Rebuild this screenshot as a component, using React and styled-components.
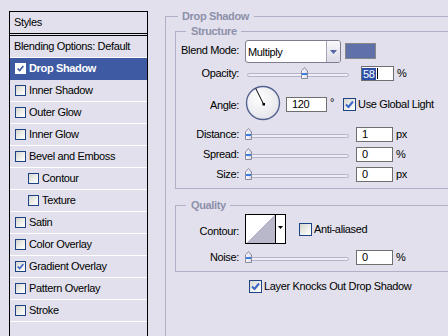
import React from 'react';
import styled, { createGlobalStyle } from 'styled-components';

const Global = createGlobalStyle`
  html, body { margin: 0; padding: 0; background: #e2e0ec; overflow: hidden; }
  body {
    font-family: "Liberation Sans", Arial, sans-serif;
    font-size: 11px;
    letter-spacing: -0.35px;
    color: #000;
  }
  * { box-sizing: border-box; }
`;

const Page = styled.div`
  display: flex;
  align-items: flex-start;
  width: 448px;
  height: 336px;
  overflow: hidden;
`;

/* ---------- left styles list ---------- */
const StylesPanel = styled.div`
  flex: none;
  width: 139px;
  height: 330px;
  margin: 11px 0 0 9px;
  border: 1px solid #000;
  border-bottom: none;
`;

const PanelHeader = styled.div`
  height: 24px;
  padding-left: 4px;
  line-height: 20px;
  border-bottom: 3px double #000;
`;

const StyleRow = styled.div`
  display: flex;
  align-items: center;
  gap: 3px;
  height: 22px;
  padding-left: ${p => (p.$plain ? 4 : p.$indent ? 18 : 5)}px;
  line-height: 21px;
  white-space: nowrap;
  border-bottom: 1px solid ${p => (p.$selected ? '#3e5aa3' : '#fff')};
  background: ${p => (p.$selected ? '#3e5aa3' : 'transparent')};
  color: ${p => (p.$selected ? '#fff' : '#000')};
  font-weight: ${p => (p.$selected ? 'bold' : 'normal')};
`;

const Box = styled.span`
  flex: none;
  display: inline-flex;
  align-items: center;
  justify-content: center;
  width: ${p => p.$size}px;
  height: ${p => p.$size}px;
  border: 1px solid ${p => (p.$light ? '#fff' : '#1c4284')};
  background: ${p =>
    p.$light ? '#fff' : 'linear-gradient(135deg, #d6d6d0 0%, #efefeb 55%, #fff 100%)'};
`;

const CheckBox = ({ size = 13, checked, light }) => (
  <Box $size={size} $light={light}>
    {checked && (
      <svg width={size - 2} height={size - 2} viewBox="0 0 11 11">
        <polyline
          points="2,5.5 4.5,8 9,2.5"
          fill="none"
          stroke={light ? '#3e5aa3' : '#3a66c8'}
          strokeWidth="2"
        />
      </svg>
    )}
  </Box>
);

/* ---------- right options ---------- */
const Options = styled.fieldset`
  flex: none;
  width: 400px;
  height: 340px;
  min-width: 0;
  margin: 9px 0 0 17px;
  padding: 0 0 0 9px;
  border: none;
  border-top: 1px solid #b1b0c7;
  border-left: 1px solid #b1b0c7;
`;

const GroupTitle = styled.legend`
  margin-left: ${p => p.$ml}px;
  padding: 0 ${p => p.$pr}px 0 ${p => p.$pl}px;
  font-weight: bold;
  color: #8d90a9;
  line-height: 14px;
`;

const Group = styled.fieldset`
  width: 320px;
  min-width: 0;
  margin: ${p => p.$mt}px 0 0 0;
  padding: 0 0 6px 0;
  border: 1px solid #b1b0c7;
  border-right: none;
`;

const FieldRow = styled.div`
  display: flex;
  align-items: flex-start;
  margin-top: ${p => p.$mt || 0}px;
  white-space: nowrap;
`;

const FieldLabel = styled.span`
  flex: none;
  width: 63px;
  margin-right: 6px;
  padding-top: ${p => p.$pt || 0}px;
  text-align: right;
  line-height: 14px;
`;

const Select = styled.div`
  flex: none;
  display: flex;
  width: 96px;
  height: 23px;
  border: 1px solid #7d7d8e;
  border-radius: 3px;
  background: #fff;
  overflow: hidden;
`;

const SelectValue = styled.span`
  flex: 1;
  padding: 2px 0 0 2px;
  line-height: 19px;
`;

const SelectButton = styled.span`
  flex: none;
  width: 14px;
  display: flex;
  align-items: center;
  justify-content: center;
  border-left: 1px solid #a6a6b8;
  background: linear-gradient(#f8f8fb, #dcdbe6);
`;

const Swatch = styled.div`
  flex: none;
  width: 31px;
  height: 16px;
  margin: 3px 0 0 4px;
  border: 1px solid #878787;
  background: #6070a9;
`;

const SliderBox = styled.div`
  position: relative;
  flex: none;
  width: 104px;
  height: 15px;
  padding: 7px 0 0 2px;
`;

const Track = styled.div`
  height: 4px;
  border: 1px solid #b5b4cc;
  border-radius: 2px;
  background: #eeedf4;
`;

const Thumb = styled.svg`
  position: absolute;
  top: 1px;
`;

const Slider = ({ value }) => (
  <SliderBox>
    <Track />
    <Thumb width="7" height="12" viewBox="0 0 7 12" style={{ left: `${(value / 100) * 97}px` }}>
      <defs>
        <linearGradient id="tg" x1="0" x2="1">
          <stop offset="0" stopColor="#fff" />
          <stop offset="1" stopColor="#d8d8e2" />
        </linearGradient>
      </defs>
      <path d="M3.5 0.5 L6.5 4 L6.5 11.5 L0.5 11.5 L0.5 4 Z" fill="url(#tg)" stroke="#8a8a9c" />
      <rect x="1" y="6" width="5" height="2" fill="#3a7ee0" />
    </Thumb>
  </SliderBox>
);

const NumberBox = styled.div`
  flex: none;
  display: flex;
  align-items: center;
  width: ${p => p.$w}px;
  height: 15px;
  margin-left: ${p => p.$ml}px;
  margin-top: ${p => p.$mt || 0}px;
  padding-left: ${p => (p.$pl === undefined ? 5 : p.$pl)}px;
  border: 1px solid #6f6f6f;
  background: #fff;
  line-height: 13px;
`;

const Selected = styled.span`
  display: inline-block;
  height: 12px;
  line-height: 12px;
  padding: 0 1px;
  background: #2c4ea8;
  color: #fff;
`;

const Caret = styled.span`
  display: inline-block;
  width: 1px;
  height: 11px;
  margin-left: 1px;
  background: #000;
`;

const Unit = styled.span`
  flex: none;
  margin-left: 3px;
  margin-top: ${p => p.$mt || 0}px;
  line-height: 14px;
`;

const CheckLabel = styled.label`
  flex: none;
  display: flex;
  align-items: center;
  gap: 2px;
  margin-left: ${p => p.$ml || 0}px;
  margin-top: ${p => p.$mt || 0}px;
  align-self: ${p => (p.$center ? 'center' : 'flex-start')};
  line-height: 14px;
  white-space: nowrap;
`;

const DialSvg = styled.svg`
  flex: none;
`;

const Dial = () => (
  <DialSvg width="36" height="36" viewBox="0 0 36 36">
    <defs>
      <radialGradient id="dg" cx="0.4" cy="0.35" r="0.7">
        <stop offset="0" stopColor="#ffffff" />
        <stop offset="1" stopColor="#e4e3ea" />
      </radialGradient>
    </defs>
    <circle cx="18" cy="18" r="16.5" fill="url(#dg)" stroke="#53618f" strokeWidth="1.4" />
    <line x1="18.5" y1="19" x2="10.8" y2="3.6" stroke="#000" strokeWidth="1" />
    <rect x="17.5" y="18" width="2.5" height="2.5" fill="#000" />
  </DialSvg>
);

const ContourPicker = styled.div`
  flex: none;
  display: flex;
  width: 41px;
  height: 30px;
  border: 1px solid #000;
  background: #fff;
`;

const ContourPreview = styled.div`
  flex: none;
  width: 30px;
  height: 100%;
  border-right: 1px solid #000;
  background: linear-gradient(to bottom right, #fff 50%, #b9b8cb 50%);
`;

const ContourButton = styled.div`
  flex: 1;
  display: flex;
  align-items: center;
  justify-content: center;
  padding-bottom: 3px;
`;

const styleItems = [
  { name: 'Drop Shadow', checked: true, selected: true },
  { name: 'Inner Shadow' },
  { name: 'Outer Glow' },
  { name: 'Inner Glow' },
  { name: 'Bevel and Emboss' },
  { name: 'Contour', indent: true },
  { name: 'Texture', indent: true },
  { name: 'Satin' },
  { name: 'Color Overlay' },
  { name: 'Gradient Overlay', checked: true },
  { name: 'Pattern Overlay' },
  { name: 'Stroke' },
];

const sliderRows = [
  { label: 'Distance:', value: 0, text: '1', unit: 'px', mt: 6 },
  { label: 'Spread:', value: 0, text: '0', unit: '%', mt: 5 },
  { label: 'Size:', value: 0, text: '0', unit: 'px', mt: 5 },
];

export default function App() {
  return (
    <Page>
      <Global />
      <StylesPanel>
        <PanelHeader>Styles</PanelHeader>
        <StyleRow $plain>Blending Options: Default</StyleRow>
        {styleItems.map(item => (
          <StyleRow key={item.name} $selected={item.selected} $indent={item.indent}>
            <CheckBox size={11} checked={item.checked} light={item.selected} />
            <span>{item.name}</span>
          </StyleRow>
        ))}
      </StylesPanel>

      <Options>
        <GroupTitle $ml={3} $pl={4} $pr={5}>Drop Shadow</GroupTitle>

        <Group $mt={1}>
          <GroupTitle $ml={10} $pl={5} $pr={4}>Structure</GroupTitle>

          <FieldRow $mt={2}>
            <FieldLabel $pt={3}>Blend Mode:</FieldLabel>
            <Select>
              <SelectValue>Multiply</SelectValue>
              <SelectButton>
                <svg width="7" height="4" viewBox="0 0 7 4">
                  <polygon points="0,0 7,0 3.5,4" fill="#5463a3" />
                </svg>
              </SelectButton>
            </Select>
            <Swatch />
          </FieldRow>

          <FieldRow $mt={3}>
            <FieldLabel>Opacity:</FieldLabel>
            <Slider value={58} />
            <NumberBox $w={33} $ml={12} $pl={0}>
              <Selected>58</Selected>
              <Caret />
            </NumberBox>
            <Unit>%</Unit>
          </FieldRow>

          <FieldRow $mt={4}>
            <FieldLabel $pt={13}>Angle:</FieldLabel>
            <Dial />
            <NumberBox $w={41} $ml={5} $mt={12}>120</NumberBox>
            <Unit $mt={10}>°</Unit>
            <CheckLabel $ml={9} $mt={12}>
              <CheckBox size={13} checked />
              <span>Use Global Light</span>
            </CheckLabel>
          </FieldRow>

          {sliderRows.map(r => (
            <FieldRow key={r.label} $mt={r.mt}>
              <FieldLabel>{r.label}</FieldLabel>
              <Slider value={r.value} />
              <NumberBox $w={37} $ml={7}>{r.text}</NumberBox>
              <Unit>{r.unit}</Unit>
            </FieldRow>
          ))}
        </Group>

        <Group $mt={9}>
          <GroupTitle $ml={10} $pl={5} $pr={4}>Quality</GroupTitle>

          <FieldRow $mt={2}>
            <FieldLabel $pt={10}>Contour:</FieldLabel>
            <ContourPicker>
              <ContourPreview />
              <ContourButton>
                <svg width="5" height="3" viewBox="0 0 5 3">
                  <polygon points="0,0 5,0 2.5,3" fill="#000" />
                </svg>
              </ContourButton>
            </ContourPicker>
            <CheckLabel $ml={13} $center>
              <CheckBox size={13} />
              <span>Anti-aliased</span>
            </CheckLabel>
          </FieldRow>

          <FieldRow $mt={6}>
            <FieldLabel>Noise:</FieldLabel>
            <Slider value={0} />
            <NumberBox $w={37} $ml={7}>0</NumberBox>
            <Unit>%</Unit>
          </FieldRow>
        </Group>

        <FieldRow $mt={7}>
          <CheckLabel $ml={74}>
            <CheckBox size={13} checked />
            <span>Layer Knocks Out Drop Shadow</span>
          </CheckLabel>
        </FieldRow>
      </Options>
    </Page>
  );
}
